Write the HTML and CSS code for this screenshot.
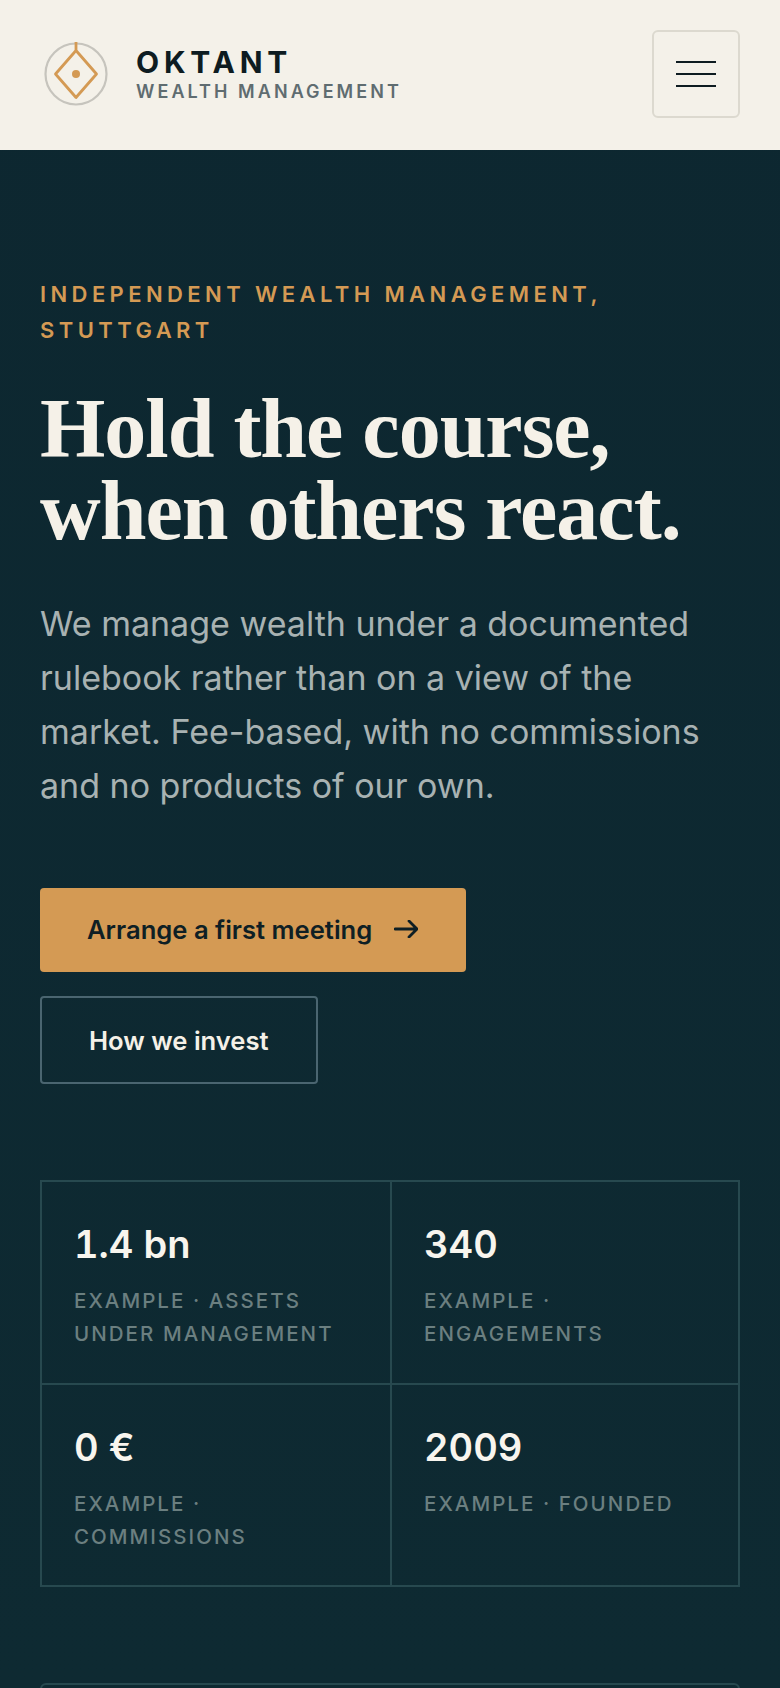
FILE: index.html
```html
<!DOCTYPE html>
<html lang="en">
<head>
  <meta charset="UTF-8">
  <title>Oktant Wealth Management</title>
  <link rel="stylesheet" href="styles.css">
</head>
<body>
  <header class="site-header">
    <a class="brand" href="#">
      <svg class="brand-mark" width="64" height="64" viewBox="0 0 64 64" fill="none">
        <circle cx="32" cy="32" r="30.500" stroke="#c6c4bd" stroke-width="2.200"/>
        <path d="M32 0V8.500L52.500 32L32 55.500L11.500 32L32 8.500" stroke="#d49a54" stroke-width="2.800" stroke-linejoin="round"/>
        <circle cx="32" cy="32" r="4" fill="#d49a54"/>
      </svg>
      <span class="brand-text">
        <span class="brand-name">OKTANT</span>
        <span class="brand-sub">WEALTH MANAGEMENT</span>
      </span>
    </a>
    <button class="menu-btn" aria-label="Menu">
      <span></span><span></span><span></span>
    </button>
  </header>

  <main class="hero">
    <p class="eyebrow">INDEPENDENT WEALTH MANAGEMENT, STUTTGART</p>
    <h1>Hold the course,<br>when others react.</h1>
    <p class="lead">We manage wealth under a documented rulebook rather than on a view of the market. Fee-based, with no commissions and no products of our own.</p>

    <div class="actions">
      <a class="btn btn-primary" href="#">
        Arrange a first meeting
        <svg width="24" height="18" viewBox="0 0 24 18" fill="none">
          <path d="M1 9H23M15 1L23 9L15 17" stroke="#0f1f24" stroke-width="2.800" stroke-linecap="round" stroke-linejoin="round"/>
        </svg>
      </a>
      <a class="btn btn-outline" href="#">How we invest</a>
    </div>

    <div class="stats">
      <div class="stat">
        <div class="stat-value">1.4 bn</div>
        <div class="stat-label">EXAMPLE · ASSETS UNDER MANAGEMENT</div>
      </div>
      <div class="stat">
        <div class="stat-value">340</div>
        <div class="stat-label">EXAMPLE · ENGAGEMENTS</div>
      </div>
      <div class="stat">
        <div class="stat-value">0 €</div>
        <div class="stat-label">EXAMPLE · COMMISSIONS</div>
      </div>
      <div class="stat">
        <div class="stat-value">2009</div>
        <div class="stat-label">EXAMPLE · FOUNDED</div>
      </div>
    </div>

    <div class="next-card"></div>
  </main>
</body>
</html>
```

FILE: styles.css
```css
html, body {
  margin: 0;
  height: 1688px;
  overflow: hidden;
}
body {
  background: linear-gradient(#0d2730, #0e2a32);
  font-family: 'Inter', sans-serif;
  color: #f5f1e8;
}
a {
  text-decoration: none;
}
.site-header {
  height: 150px;
  box-sizing: border-box;
  padding: 30px 40px 0 44px;
  background-color: #f4f1e9;
  display: flex;
  justify-content: space-between;
  align-items: flex-start;
}
.brand {
  display: flex;
  align-items: center;
  gap: 28px;
  height: 88px;
}
.brand-mark {
  flex-shrink: 0;
  margin-top: -1px;
}
.brand-text {
  display: flex;
  flex-direction: column;
}
.brand-name {
  font-size: 30px;
  line-height: 34px;
  font-weight: 700;
  letter-spacing: 0.16em;
  color: #0e1c21;
}
.brand-sub {
  margin-top: 1px;
  font-size: 18px;
  line-height: 24px;
  font-weight: 600;
  letter-spacing: 0.17em;
  color: #5f6c70;
}
.menu-btn {
  width: 88px;
  height: 88px;
  padding: 0;
  box-sizing: border-box;
  background: none;
  border: 2px solid #dcd9cf;
  border-radius: 6px;
  display: flex;
  flex-direction: column;
  align-items: center;
  justify-content: center;
  gap: 10px;
}
.menu-btn span {
  display: block;
  width: 40px;
  height: 2px;
  background-color: #0e1c21;
}
.hero {
  padding: 126px 40px 0;
}
.eyebrow {
  margin: 0;
  font-size: 22px;
  line-height: 36px;
  font-weight: 600;
  letter-spacing: 0.2em;
  color: #d49a54;
}
h1 {
  margin: 40px 0 0;
  font-family: 'Liberation Serif', serif;
  font-size: 84px;
  line-height: 82px;
  font-weight: 700;
  letter-spacing: -1px;
  color: #f5f1e8;
}
.lead {
  margin: 45px 0 0;
  font-size: 34px;
  line-height: 54px;
  color: #a8b2b2;
}
.actions {
  margin-top: 75px;
  display: flex;
  flex-direction: column;
  align-items: flex-start;
  gap: 24px;
}
.btn {
  box-sizing: border-box;
  display: inline-flex;
  align-items: center;
  font-size: 25.600px;
  font-weight: 600;
  border-radius: 4px;
}
.btn-primary {
  height: 84px;
  padding: 0 48px 2px 47px;
  gap: 22px;
  background-color: #d49a54;
  color: #0f1f24;
}
.btn-outline {
  height: 88px;
  padding: 0 47px;
  border: 2px solid #4a6570;
  color: #f5f1e8;
}
.stats {
  margin-top: 96px;
  display: grid;
  grid-template-columns: 1fr 1fr;
  border: 2px solid #27494f;
}
.stat {
  padding: 39px 32px 32.500px;
}
.stat:nth-child(even) {
  border-left: 2px solid #27494f;
}
.stat:nth-child(n+3) {
  border-top: 2px solid #27494f;
}
.stat-value {
  font-size: 38px;
  line-height: 46px;
  font-weight: 600;
  font-variant-numeric: tabular-nums;
  color: #f8f5ee;
}
.stat-label {
  margin-top: 17px;
  font-size: 20.500px;
  line-height: 33px;
  font-weight: 500;
  letter-spacing: 0.1em;
  color: #6b7f80;
}
.next-card {
  margin-top: 96px;
  height: 200px;
  border: 2px solid #27494f;
  border-radius: 6px;
}
```
